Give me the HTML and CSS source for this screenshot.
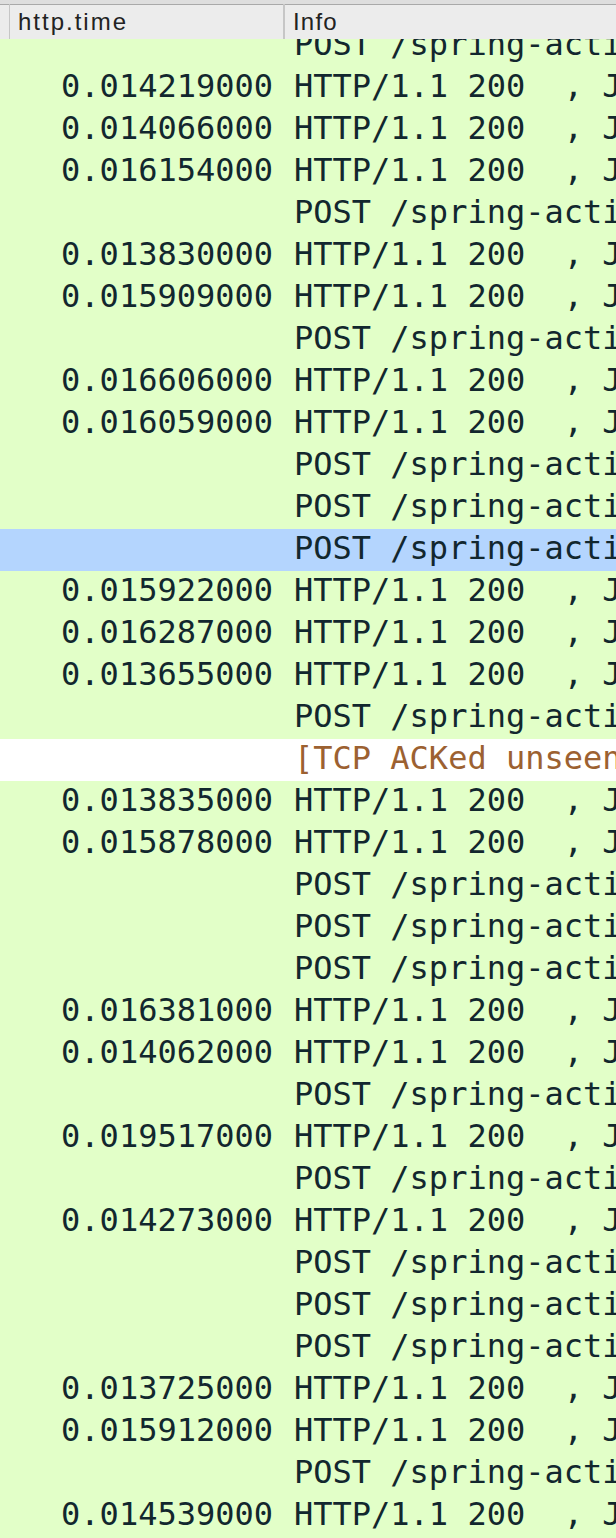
FILE: index.html
```html
<!DOCTYPE html>
<html>
<head>
<meta charset="utf-8">
<link rel="stylesheet" href="styles.css">
</head>
<body>
<div class="table">
  <div class="header">
    <div class="hcell hcell-time">http.time</div>
    <div class="hcell hcell-info">Info</div>
  </div>
  <div class="viewport">
    <div class="rows">
      <div class="row"><div class="c-time"></div><div class="c-info">POST /spring-action/api/order HTTP/1.1</div></div>
      <div class="row"><div class="c-time">0.014219000</div><div class="c-info">HTTP/1.1 200  , JavaScript Object Notation</div></div>
      <div class="row"><div class="c-time">0.014066000</div><div class="c-info">HTTP/1.1 200  , JavaScript Object Notation</div></div>
      <div class="row"><div class="c-time">0.016154000</div><div class="c-info">HTTP/1.1 200  , JavaScript Object Notation</div></div>
      <div class="row"><div class="c-time"></div><div class="c-info">POST /spring-action/api/order HTTP/1.1</div></div>
      <div class="row"><div class="c-time">0.013830000</div><div class="c-info">HTTP/1.1 200  , JavaScript Object Notation</div></div>
      <div class="row"><div class="c-time">0.015909000</div><div class="c-info">HTTP/1.1 200  , JavaScript Object Notation</div></div>
      <div class="row"><div class="c-time"></div><div class="c-info">POST /spring-action/api/order HTTP/1.1</div></div>
      <div class="row"><div class="c-time">0.016606000</div><div class="c-info">HTTP/1.1 200  , JavaScript Object Notation</div></div>
      <div class="row"><div class="c-time">0.016059000</div><div class="c-info">HTTP/1.1 200  , JavaScript Object Notation</div></div>
      <div class="row"><div class="c-time"></div><div class="c-info">POST /spring-action/api/order HTTP/1.1</div></div>
      <div class="row"><div class="c-time"></div><div class="c-info">POST /spring-action/api/order HTTP/1.1</div></div>
      <div class="row selected"><div class="c-time"></div><div class="c-info">POST /spring-action/api/order HTTP/1.1</div></div>
      <div class="row"><div class="c-time">0.015922000</div><div class="c-info">HTTP/1.1 200  , JavaScript Object Notation</div></div>
      <div class="row"><div class="c-time">0.016287000</div><div class="c-info">HTTP/1.1 200  , JavaScript Object Notation</div></div>
      <div class="row"><div class="c-time">0.013655000</div><div class="c-info">HTTP/1.1 200  , JavaScript Object Notation</div></div>
      <div class="row"><div class="c-time"></div><div class="c-info">POST /spring-action/api/order HTTP/1.1</div></div>
      <div class="row warn"><div class="c-time"></div><div class="c-info">[TCP ACKed unseen segment] 8080 &rarr; 52311 [ACK]</div></div>
      <div class="row"><div class="c-time">0.013835000</div><div class="c-info">HTTP/1.1 200  , JavaScript Object Notation</div></div>
      <div class="row"><div class="c-time">0.015878000</div><div class="c-info">HTTP/1.1 200  , JavaScript Object Notation</div></div>
      <div class="row"><div class="c-time"></div><div class="c-info">POST /spring-action/api/order HTTP/1.1</div></div>
      <div class="row"><div class="c-time"></div><div class="c-info">POST /spring-action/api/order HTTP/1.1</div></div>
      <div class="row"><div class="c-time"></div><div class="c-info">POST /spring-action/api/order HTTP/1.1</div></div>
      <div class="row"><div class="c-time">0.016381000</div><div class="c-info">HTTP/1.1 200  , JavaScript Object Notation</div></div>
      <div class="row"><div class="c-time">0.014062000</div><div class="c-info">HTTP/1.1 200  , JavaScript Object Notation</div></div>
      <div class="row"><div class="c-time"></div><div class="c-info">POST /spring-action/api/order HTTP/1.1</div></div>
      <div class="row"><div class="c-time">0.019517000</div><div class="c-info">HTTP/1.1 200  , JavaScript Object Notation</div></div>
      <div class="row"><div class="c-time"></div><div class="c-info">POST /spring-action/api/order HTTP/1.1</div></div>
      <div class="row"><div class="c-time">0.014273000</div><div class="c-info">HTTP/1.1 200  , JavaScript Object Notation</div></div>
      <div class="row"><div class="c-time"></div><div class="c-info">POST /spring-action/api/order HTTP/1.1</div></div>
      <div class="row"><div class="c-time"></div><div class="c-info">POST /spring-action/api/order HTTP/1.1</div></div>
      <div class="row"><div class="c-time"></div><div class="c-info">POST /spring-action/api/order HTTP/1.1</div></div>
      <div class="row"><div class="c-time">0.013725000</div><div class="c-info">HTTP/1.1 200  , JavaScript Object Notation</div></div>
      <div class="row"><div class="c-time">0.015912000</div><div class="c-info">HTTP/1.1 200  , JavaScript Object Notation</div></div>
      <div class="row"><div class="c-time"></div><div class="c-info">POST /spring-action/api/order HTTP/1.1</div></div>
      <div class="row"><div class="c-time">0.014539000</div><div class="c-info">HTTP/1.1 200  , JavaScript Object Notation</div></div>
    </div>
  </div>
</div>
</body>
</html>
```
FILE: styles.css
```css
html, body {
  margin: 0;
  padding: 0;
  background: #e2ffc8;
}
body {
  width: 616px;
  height: 1538px;
  overflow: hidden;
}
.table {
  width: 616px;
  display: flex;
  flex-direction: column;
}
.header {
  height: 35px;
  box-sizing: content-box;
  border-top: 4px solid #dedede;
  box-shadow: inset 0 1px 0 #a9a9a9;
  background: #ececec;
  display: grid;
  grid-template-columns: 274px 1fr;
  padding-left: 9px;
  font-family: "Liberation Sans", Arial, sans-serif;
  font-size: 24px;
  color: #222222;
  position: relative;
  z-index: 1;
}
.hcell {
  display: flex;
  align-items: center;
  border-left: 2px solid #c6c6c6;
  line-height: 35px;
  white-space: nowrap;
  overflow: hidden;
}
.hcell-time { padding-left: 8px; border-left-width: 1px; letter-spacing: 2px; }
.hcell-info { padding-left: 8px; letter-spacing: 1.2px; }
.viewport {
  height: 1498px;
  overflow: hidden;
}
.rows {
  margin-top: -14px;
  font-family: "DejaVu Sans Mono", monospace;
  font-size: 32px;
  color: #12272e;
}
.row {
  height: 42px;
  display: grid;
  grid-template-columns: 284px 332px;
  background: #e2ffc8;
  line-height: 39px;
  white-space: pre;
}
.row.selected { background: #b4d5fe; }
.row.warn { background: #ffffff; color: #9c6131; }
.c-time {
  text-align: right;
  padding-right: 11px;
  overflow: hidden;
}
.c-info {
  padding-left: 10px;
  overflow: hidden;
}
```
